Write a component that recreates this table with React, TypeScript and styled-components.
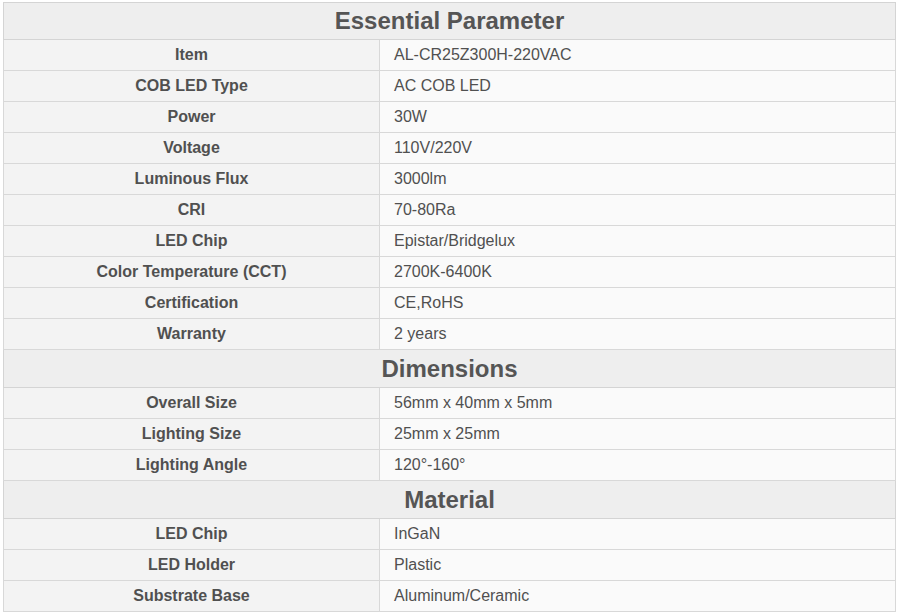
import React from "react";
import styled, { createGlobalStyle } from "styled-components";

const GlobalStyle = createGlobalStyle`
  body {
    margin: 0;
    background: #ffffff;
    font-family: "Liberation Sans", Arial, sans-serif;
  }
`;

const Page = styled.div`
  padding: 2px 4px 0 3px;
`;

const Table = styled.table`
  width: 893px;
  border-collapse: collapse;
  table-layout: fixed;
  color: #505050;
`;

const SectionCell = styled.th<{ $tall?: boolean }>`
  height: ${(p) => (p.$tall ? 37 : 36)}px;
  padding: 0;
  background: #eeeeee;
  border: 1px solid #d4d4d4;
  font-size: 24px;
  line-height: 28px;
  font-weight: bold;
  text-align: center;
  vertical-align: middle;
  color: #555555;
`;

const LabelCell = styled.td`
  height: 29px;
  padding: 0 0 1px;
  background: #f3f3f3;
  border: 1px solid #d8d8d8;
  font-size: 16px;
  line-height: 18px;
  font-weight: bold;
  text-align: center;
  vertical-align: middle;
`;

const ValueCell = styled.td`
  height: 29px;
  padding: 0 0 1px 14px;
  background: #fafafa;
  border: 1px solid #d8d8d8;
  font-size: 16px;
  line-height: 18px;
  text-align: left;
  vertical-align: middle;
`;

type Section = { title: string; tall?: boolean; rows: [string, string][] };

const sections: Section[] = [
  {
    title: "Essential Parameter",
    rows: [
      ["Item", "AL-CR25Z300H-220VAC"],
      ["COB LED Type", "AC COB LED"],
      ["Power", "30W"],
      ["Voltage", "110V/220V"],
      ["Luminous Flux", "3000lm"],
      ["CRI", "70-80Ra"],
      ["LED Chip", "Epistar/Bridgelux"],
      ["Color Temperature (CCT)", "2700K-6400K"],
      ["Certification", "CE,RoHS"],
      ["Warranty", "2 years"],
    ],
  },
  {
    title: "Dimensions",
    tall: true,
    rows: [
      ["Overall Size", "56mm x 40mm x 5mm"],
      ["Lighting Size", "25mm x 25mm"],
      ["Lighting Angle", "120°-160°"],
    ],
  },
  {
    title: "Material",
    tall: true,
    rows: [
      ["LED Chip", "InGaN"],
      ["LED Holder", "Plastic"],
      ["Substrate Base", "Aluminum/Ceramic"],
    ],
  },
];

export default function App() {
  return (
    <Page>
      <GlobalStyle />
      <Table>
        <colgroup>
          <col style={{ width: 376 }} />
          <col />
        </colgroup>
        <tbody>
          {sections.map((s) => (
            <React.Fragment key={s.title}>
              <tr>
                <SectionCell colSpan={2} $tall={s.tall}>
                  {s.title}
                </SectionCell>
              </tr>
              {s.rows.map(([label, value]) => (
                <tr key={s.title + label}>
                  <LabelCell>{label}</LabelCell>
                  <ValueCell>{value}</ValueCell>
                </tr>
              ))}
            </React.Fragment>
          ))}
        </tbody>
      </Table>
    </Page>
  );
}
